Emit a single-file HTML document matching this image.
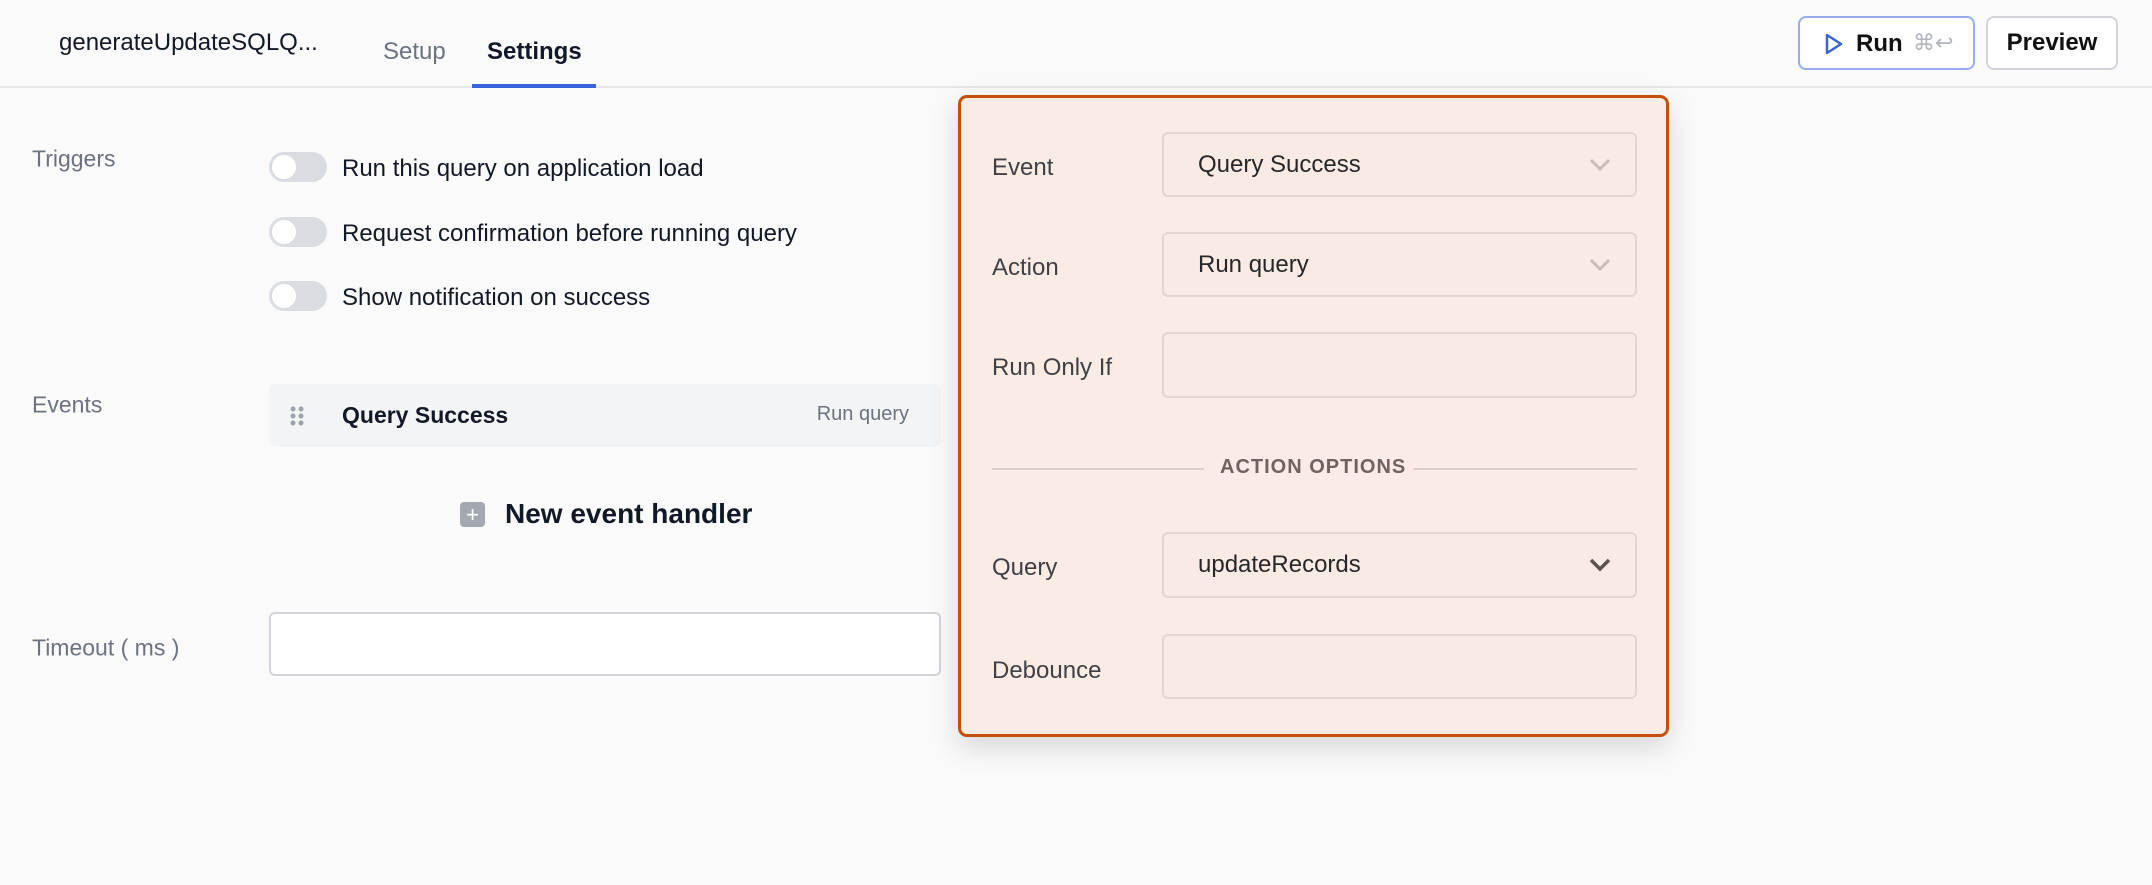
<!DOCTYPE html>
<html><head><meta charset="utf-8"><style>
*{box-sizing:border-box;margin:0;padding:0}
body{width:2152px;height:885px;background:#fafafa;font-family:"Liberation Sans",sans-serif;position:relative;overflow:hidden;color:#111827}
.a{position:absolute;white-space:nowrap}
.hdr{position:absolute;left:0;top:0;width:2152px;height:88px;border-bottom:2px solid #e5e7eb}
.lbl{position:absolute;font-size:23px;color:#6b7280;transform:translateY(-50%)}
.tog{position:absolute;left:269px;width:58px;height:30px;border-radius:15px;background:#d9dce1;transform:translateY(-50%)}
.tog:after{content:"";position:absolute;left:3px;top:3px;width:24px;height:24px;border-radius:12px;background:#fff}
.tt{position:absolute;left:342px;font-size:24px;color:#111827;transform:translateY(-50%)}
.panel{position:absolute;left:958px;top:95px;width:711px;height:642px;background:#faece4;border:3px solid #c2500a;border-radius:9px;box-shadow:0 10px 30px rgba(0,0,0,.15)}
.pl{position:absolute;left:31px;font-size:24px;color:#3f3f46;transform:translateY(-50%)}
.in{position:absolute;left:201px;width:475px;border:2px solid #e2d6cf;border-radius:6px;background:#f9ebe3}
.in span{position:absolute;left:34px;top:50%;transform:translateY(-50%);font-size:24px;color:#27272a}
.chev{position:absolute;right:24px;top:50%;transform:translateY(-50%)}
</style></head><body>
<div class="hdr"></div>
<div class="a" style="left:59px;top:29px;font-size:24px;color:#111827">generateUpdateSQLQ...</div>
<div class="a" style="left:383px;top:38px;font-size:24px;color:#6b7280">Setup</div>
<div class="a" style="left:487px;top:38px;font-size:24px;font-weight:bold;color:#111827">Settings</div>
<div class="a" style="left:472px;top:84px;width:124px;height:4px;background:#3b63d9"></div>
<div class="a" style="left:1798px;top:16px;width:177px;height:54px;border:2px solid #93aef5;border-radius:8px;background:#fff">
<svg class="a" style="left:24px;top:14px" width="20" height="24" viewBox="0 0 20 24"><path d="M3 3 L17 12 L3 21 Z" fill="none" stroke="#3b63d9" stroke-width="2.5" stroke-linejoin="round"/></svg>
<div class="a" style="left:56px;top:12px;font-size:24px;font-weight:bold;color:#111">Run</div>
<div class="a" style="left:113px;top:12px;font-size:22px;color:#b0b5bd">⌘↩</div>
</div>
<div class="a" style="left:1986px;top:16px;width:132px;height:54px;border:2px solid #d1d5db;border-radius:8px;background:#fff;text-align:center;line-height:50px;font-size:24px;font-weight:bold;color:#111">Preview</div>

<div class="lbl" style="left:32px;top:159px">Triggers</div>
<div class="tog" style="top:167px"></div><div class="tt" style="top:169px">Run this query on application load</div>
<div class="tog" style="top:232px"></div><div class="tt" style="top:234px">Request confirmation before running query</div>
<div class="tog" style="top:296px"></div><div class="tt" style="top:298px">Show notification on success</div>

<div class="lbl" style="left:32px;top:405px">Events</div>
<div class="a" style="left:269px;top:384px;width:672px;height:63px;background:#f3f4f6;border-radius:8px">
<svg class="a" style="left:21px;top:22px" width="14" height="20"><g fill="#9ca3af"><circle cx="3" cy="3" r="2.5"/><circle cx="11" cy="3" r="2.5"/><circle cx="3" cy="10" r="2.5"/><circle cx="11" cy="10" r="2.5"/><circle cx="3" cy="17" r="2.5"/><circle cx="11" cy="17" r="2.5"/></g></svg>
<div class="a" style="left:73px;top:18px;font-size:23px;font-weight:bold;color:#111827">Query Success</div>
<div class="a" style="right:32px;top:19px;font-size:20px;color:#6b7280">Run query</div>
</div>
<div class="a" style="left:460px;top:502px;width:25px;height:25px;border-radius:4px;background:#a3a8b1;color:#fff;text-align:center;line-height:25px;font-size:22px">+</div>
<div class="a" style="left:505px;top:498px;font-size:28px;font-weight:bold;color:#111827">New event handler</div>

<div class="lbl" style="left:32px;top:648px">Timeout ( ms )</div>
<div class="a" style="left:269px;top:612px;width:672px;height:64px;background:#fff;border:2px solid #d1d5db;border-radius:6px"></div>

<div class="panel">
<div class="pl" style="top:70px">Event</div>
<div class="in" style="top:34px;height:65px"><span>Query Success</span><svg class="chev" width="22" height="14"><path d="M2 2 L11 11 L20 2" fill="none" stroke="#c9bcb4" stroke-width="3"/></svg></div>
<div class="pl" style="top:170px">Action</div>
<div class="in" style="top:134px;height:65px"><span>Run query</span><svg class="chev" width="22" height="14"><path d="M2 2 L11 11 L20 2" fill="none" stroke="#c9bcb4" stroke-width="3"/></svg></div>
<div class="pl" style="top:270px">Run Only If</div>
<div class="in" style="top:234px;height:66px"></div>
<div class="a" style="left:31px;top:370px;width:212px;height:2px;background:#ddd2cb"></div>
<div class="a" style="left:452px;top:370px;width:224px;height:2px;background:#ddd2cb"></div>
<div class="a" style="left:259px;top:358px;font-size:20px;font-weight:bold;color:#71635c;letter-spacing:1px">ACTION OPTIONS</div>
<div class="pl" style="top:470px">Query</div>
<div class="in" style="top:434px;height:66px"><span>updateRecords</span><svg class="chev" width="22" height="14"><path d="M2 2 L11 11 L20 2" fill="none" stroke="#5f524c" stroke-width="3.5"/></svg></div>
<div class="pl" style="top:573px">Debounce</div>
<div class="in" style="top:536px;height:65px"></div>
</div>
</body></html>
